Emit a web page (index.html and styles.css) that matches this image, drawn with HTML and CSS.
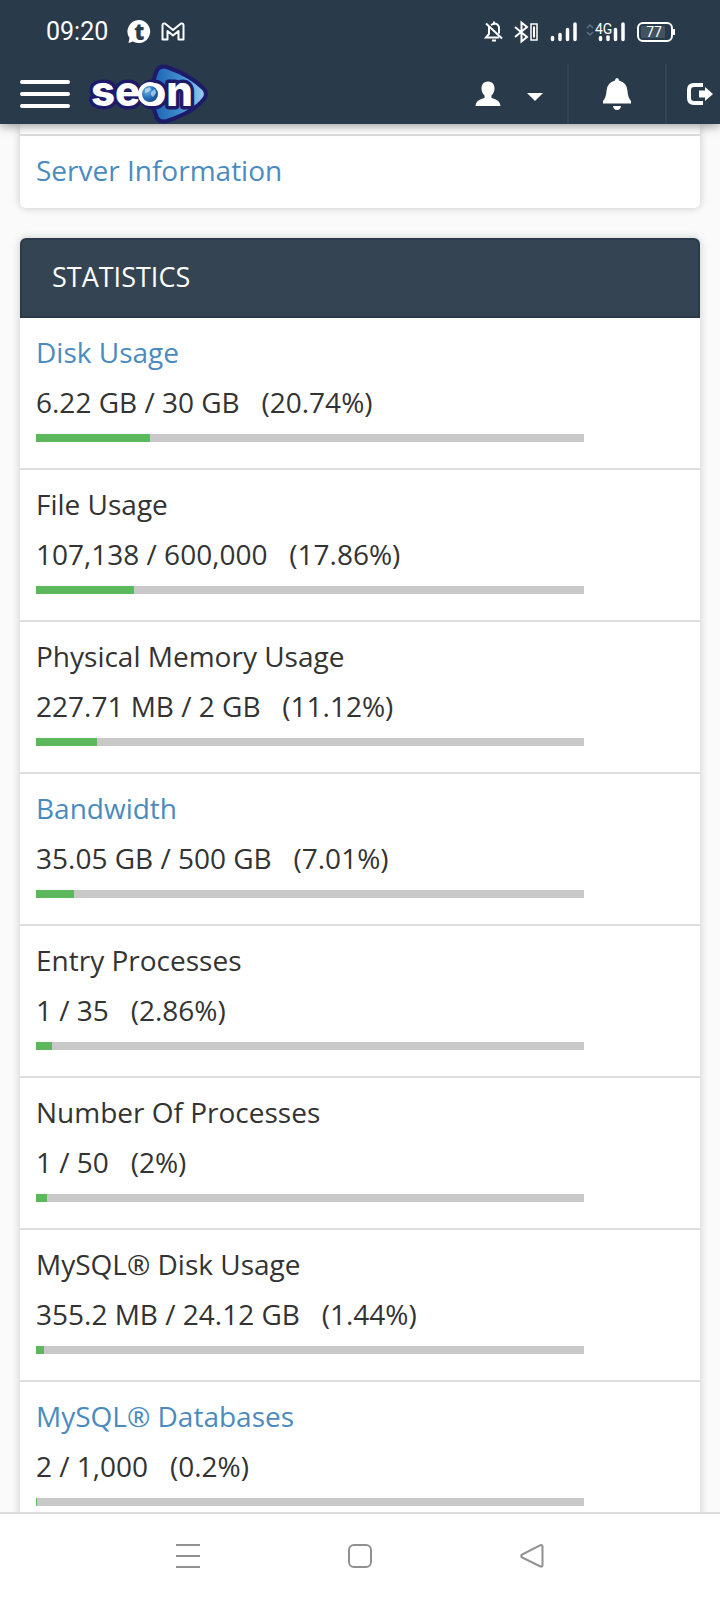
FILE: index.html
```html
<!DOCTYPE html>
<html lang="en">
<head>
    <meta charset="UTF-8">
    <meta name="viewport" content="width=device-width, initial-scale=1.0">
    <title>cPanel - Statistics</title>
    <link rel="stylesheet" href="styles.css">
</head>
<body>
    <header class="top">
        <!-- phone status bar -->
        <div class="status-bar">
            <span class="clock">09:20</span>
            <span class="app-icon">
                <svg width="24" height="24" viewBox="0 0 24 24">
                    <path d="M12 0a11.5 11.5 0 1 1-6 21.5L1.5 23l1-5A11.5 11.5 0 0 1 12 0z" fill="#fff"/>
                </svg>
                <span class="app-letter">t</span>
            </span>
            <svg class="mail-icon" width="24" height="20" viewBox="0 0 24 20">
                <path d="M1.5 17.5V3.5Q1.5 1 4 1.5L12 8l8-6.5q2.5-.5 2.5 2v14h-5V9L12 13.5 6.5 9v8.5z" fill="none" stroke="#fff" stroke-width="2" stroke-linejoin="round"/>
            </svg>
            <div class="status-right">
                <svg width="192" height="24" viewBox="0 0 192 24" fill="none" stroke="#fff">
                    <!-- muted bell -->
                    <path d="M3 3.5l16 15M6 7v7l-3 3.5h13M8 5q6-3.5 8 2v6.5" stroke-width="2"/>
                    <path d="M11 1.5v2.5M9 20.5h4" stroke-width="2"/>
                    <!-- bluetooth -->
                    <path d="M32 7l12 10-5.5 4.5V2.5L44 7 32 17" stroke-width="2"/>
                    <rect x="48" y="4" width="6" height="16" stroke-width="1.5"/>
                    <path d="M51 6.5v11" stroke-width="2"/>
                    <!-- signal -->
                    <path d="M69.5 19.5v-2M77 19.5v-5M84.5 19.5V9.5M92 19.5V4" stroke-width="3.5" stroke-linecap="round"/>
                    <path d="M104 8l3-3 3 3M104 12l3 3 3-3" stroke="#61707c" stroke-width="1.5"/>
                    <path d="M117.5 19.5v-2M125 19.5v-3M132.5 19.5V9.5M140 19.5V4" stroke-width="3.5" stroke-linecap="round"/>
                    <text class="net-label" x="112" y="14">4G</text>
                    <!-- battery -->
                    <rect x="155" y="3" width="34" height="18" rx="5" stroke-width="2"/>
                    <rect x="158" y="6" width="24" height="12" rx="1" fill="#42525f" stroke="none"/>
                    <path d="M191 9v6" stroke-width="2"/>
                    <text class="battery-label" x="171" y="17" text-anchor="middle">77</text>
                </svg>
            </div>
        </div>

        <!-- main navigation -->
        <nav class="navbar">
            <button class="menu-toggle" aria-label="Toggle navigation">
                <span></span>
                <span></span>
                <span></span>
            </button>
            <a class="logo" href="#" aria-label="seon">
                <svg width="122" height="62" viewBox="0 1 122 62">
                    <defs>
                        <linearGradient id="play" x1="0" y1="0" x2="1" y2="0">
                            <stop offset="0" stop-color="#1b5fae"/>
                            <stop offset="0.5" stop-color="#3f8bd0"/>
                            <stop offset="1" stop-color="#9fd0f2"/>
                        </linearGradient>
                        <radialGradient id="globe" cx="0.35" cy="0.35" r="0.7">
                            <stop offset="0" stop-color="#6db4e4"/>
                            <stop offset="0.5" stop-color="#2671b8"/>
                            <stop offset="1" stop-color="#0d3b78"/>
                        </radialGradient>
                    </defs>
                    <path d="M69 7Q72 2 79 4 104 13 116 26q4 5 0 10-10 13-37 22-7 2-10-3-10-24 0-48z" fill="url(#play)" stroke="#1d1a68" stroke-width="4"/>
                    <text class="logo-text" x="3" y="43">seon</text>
                    <circle cx="62" cy="31" r="10" fill="url(#globe)" stroke="#fff" stroke-width="4"/>
                    <path d="M57 26l5-2 1 3-3 2-3 1zM63 29l4-3 1 4-3 4-2-2z" fill="#c4e3f7" opacity="0.7"/>
                </svg>
            </a>
            <div class="nav-right">
                <button class="nav-item user" aria-label="User menu">
                    <svg width="26" height="26" viewBox="0 0 26 26" fill="#fff">
                        <path d="M13 .5c4.5 0 6.5 3 6.5 7 0 3.5-1.5 5.5-3 7v2.5c4.5 1.5 8.5 2.5 9 8H.5c.5-5.5 4.5-6.5 9-8v-2.5c-1.5-1.5-3-3.5-3-7 0-4 2-7 6.5-7z"/>
                    </svg>
                    <svg class="caret" width="16" height="8" viewBox="0 0 16 8" fill="#fff">
                        <path d="M0 0h16L8 8z"/>
                    </svg>
                </button>
                <button class="nav-item bell" aria-label="Notifications">
                    <svg width="28" height="32" viewBox="0 0 28 32" fill="#fff">
                        <path d="M14 0q2 0 2 2.5 8 2 8.5 10.5.5 7 3.5 10v2.5H0V23q3-3 3.5-10Q4 4.5 12 2.5 12 0 14 0zM10 28h8q-.5 4-4 4t-4-4z"/>
                    </svg>
                </button>
                <button class="nav-item logout" aria-label="Log out">
                    <svg width="26" height="24" viewBox="0 0 26 24">
                        <path d="M16 3H7Q2 3 2 8v8q0 5 5 5h9" fill="none" stroke="#fff" stroke-width="4"/>
                        <path d="M12 8.500h6V5l8 7-8 7v-3.500h-6z" fill="#fff"/>
                    </svg>
                </button>
            </div>
        </nav>
    </header>

    <main class="content">
        <section class="panel general">
            <div class="row">
                <a href="#">Server Information</a>
            </div>
        </section>

        <section class="panel">
            <h2 class="panel-title">STATISTICS</h2>
            <div class="row stat">
                <a href="#">Disk Usage</a>
                <p>6.22 GB / 30 GB &nbsp; (20.74%)</p>
                <div class="bar"><div class="fill" style="width: 20.74%"></div></div>
            </div>
            <div class="row stat">
                <span>File Usage</span>
                <p>107,138 / 600,000 &nbsp; (17.86%)</p>
                <div class="bar"><div class="fill" style="width: 17.86%"></div></div>
            </div>
            <div class="row stat">
                <span>Physical Memory Usage</span>
                <p>227.71 MB / 2 GB &nbsp; (11.12%)</p>
                <div class="bar"><div class="fill" style="width: 11.12%"></div></div>
            </div>
            <div class="row stat">
                <a href="#">Bandwidth</a>
                <p>35.05 GB / 500 GB &nbsp; (7.01%)</p>
                <div class="bar"><div class="fill" style="width: 7.01%"></div></div>
            </div>
            <div class="row stat">
                <span>Entry Processes</span>
                <p>1 / 35 &nbsp; (2.86%)</p>
                <div class="bar"><div class="fill" style="width: 2.86%"></div></div>
            </div>
            <div class="row stat">
                <span>Number Of Processes</span>
                <p>1 / 50 &nbsp; (2%)</p>
                <div class="bar"><div class="fill" style="width: 2%"></div></div>
            </div>
            <div class="row stat">
                <span>MySQL® Disk Usage</span>
                <p>355.2 MB / 24.12 GB &nbsp; (1.44%)</p>
                <div class="bar"><div class="fill" style="width: 1.44%"></div></div>
            </div>
            <div class="row stat">
                <a href="#">MySQL® Databases</a>
                <p>2 / 1,000 &nbsp; (0.2%)</p>
                <div class="bar"><div class="fill" style="width: 0.2%"></div></div>
            </div>
        </section>
    </main>

    <!-- phone navigation -->
    <footer class="phone-nav">
        <button aria-label="Recent apps">
            <svg width="24" height="24" viewBox="0 0 24 24"><path d="M0 1h24M0 12h24M0 23h24"/></svg>
        </button>
        <button aria-label="Home">
            <svg width="24" height="24" viewBox="0 0 24 24"><rect x="1" y="1" width="22" height="22" rx="5"/></svg>
        </button>
        <button aria-label="Back">
            <svg width="24" height="24" viewBox="0 0 24 24"><path d="M20.5 1.2L2 10.5q-1.5 1.5 0 3l18.500 9q2 .5 2-1.5V2.500q0-1.800-2-1.3z"/></svg>
        </button>
    </footer>
</body>
</html>
```
FILE: styles.css
```css
* {
    margin: 0;
    padding: 0;
    box-sizing: border-box;
}

body {
    font-family: "Open Sans", "Noto Sans", sans-serif;
    font-size: 28px;
    line-height: 40px;
    color: #333;
    background: #fafafa;
    height: 100vh;
    display: flex;
    flex-direction: column;
    overflow: hidden;
}

a {
    color: #4a8bbf;
    text-decoration: none;
}

button {
    background: none;
    border: none;
    cursor: pointer;
}

svg {
    display: block;
}

/* header */
.top {
    position: relative;
    z-index: 1;
    flex: none;
    background: #293a4a;
    box-shadow: 0 2px 10px rgba(0, 0, 0, 0.4);
}

.status-bar {
    display: flex;
    align-items: center;
    height: 64px;
    padding: 0 45px 0 46px;
}

.clock {
    font-family: Roboto, sans-serif;
    font-size: 25px;
    color: #fff;
}

.app-icon {
    position: relative;
    margin-left: 19px;
}

.app-letter {
    position: absolute;
    top: 0;
    left: 0;
    width: 24px;
    font-size: 22px;
    font-weight: 800;
    line-height: 22px;
    text-align: center;
    color: #293a4a;
}

.mail-icon {
    margin-left: 10px;
}

.status-right {
    margin-left: auto;
}

.net-label,
.battery-label {
    font: 14px Roboto, sans-serif;
    fill: #fff;
    stroke: none;
}

.net-label {
    stroke: #293a4a;
    stroke-width: 3px;
    paint-order: stroke;
}

.navbar {
    display: flex;
    height: 60px;
    padding-left: 20px;
}

.menu-toggle {
    display: flex;
    flex-direction: column;
    justify-content: center;
    gap: 8px;
    width: 50px;
}

.menu-toggle span {
    height: 4px;
    border-radius: 2px;
    background: #fff;
}

.logo {
    margin-left: 18px;
}

.logo-text {
    font: 800 42px Inter, sans-serif;
    fill: #fff;
    stroke: #1d1a68;
    stroke-width: 7px;
    stroke-linejoin: round;
    paint-order: stroke;
}

.nav-right {
    display: flex;
    margin-left: auto;
}

.nav-item {
    display: flex;
    align-items: center;
    justify-content: center;
}

.user {
    gap: 26px;
    padding-right: 24px;
}

.caret {
    margin-top: 6px;
}

.bell {
    width: 98px;
    border-left: 2px solid #334554;
}

.logout {
    width: 55px;
    padding-left: 12px;
    border-left: 2px solid #334554;
}

/* content */
.content {
    flex: 1;
    min-height: 0;
    overflow: hidden;
    padding: 0 20px;
}

.panel {
    margin-bottom: 30px;
    background: #fff;
    border-radius: 6px;
    box-shadow: 0 0 8px rgba(0, 0, 0, 0.2);
}

.general {
    padding-top: 10px;
    border-radius: 0 0 6px 6px;
}

.panel-title {
    padding: 17px 30px 19px;
    font-size: 27px;
    font-weight: normal;
    color: #fff;
    background: #354452;
    border: 2px solid #293a4a;
    border-radius: 6px 6px 0 0;
}

.row {
    padding: 14px 16px 18px;
    border-top: 2px solid #ddd;
}

.stat {
    display: flex;
    flex-direction: column;
    align-items: flex-start;
    padding-bottom: 26px;
}

.panel-title + .stat {
    border-top: none;
}

.stat p {
    margin-top: 10px;
}

.bar {
    width: calc(100% - 100px);
    height: 8px;
    margin-top: 12px;
    background: #c8c8c8;
}

.fill {
    height: 8px;
    background: #5cb85c;
}

/* phone navigation */
.phone-nav {
    position: relative;
    z-index: 1;
    flex: none;
    display: flex;
    align-items: center;
    justify-content: center;
    gap: 148px;
    height: 88px;
    padding-bottom: 2px;
    background: #fff;
    border-top: 2px solid #ddd;
}

.phone-nav svg {
    fill: none;
    stroke: #909090;
    stroke-width: 2px;
}
```
